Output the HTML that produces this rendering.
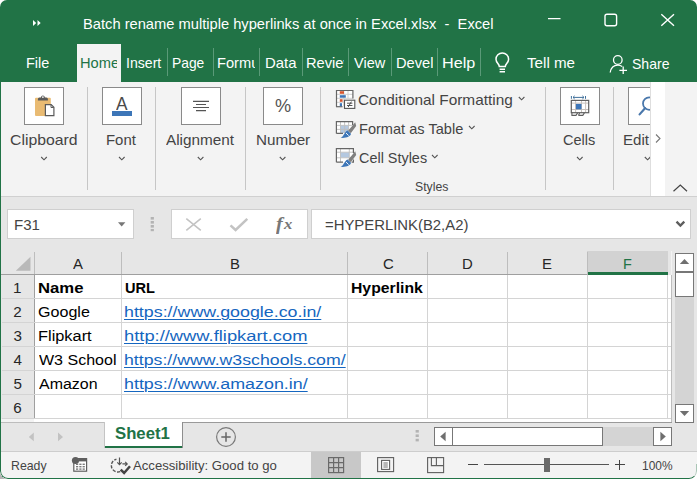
<!DOCTYPE html>
<html lang="en">
<head>
<meta charset="utf-8">
<title>Batch rename multiple hyperlinks at once in Excel.xlsx - Excel</title>
<style>
*{box-sizing:border-box;margin:0;padding:0}
html,body{width:700px;height:479px;background:#fff;overflow:hidden}
body{position:relative;font-family:"Liberation Sans",sans-serif}
.abs,.win div,.win svg{position:absolute}
.win{position:absolute;left:0;top:0;width:697px;height:478.6px;border-radius:7px 7px 8px 8px;overflow:hidden;background:#f3f3f3}
.t{position:absolute;line-height:0;white-space:pre;transform-origin:0 0;display:block;height:0}
.t u{text-decoration-thickness:1px;text-underline-offset:2.4px}
.clip{position:absolute;left:0;top:0;height:479px;overflow:hidden}
.hdr{left:0;top:0;width:697px;height:82px;background:#217346}
.hometab{left:77px;top:44px;width:44px;height:39px;background:#f3f3f3}
.tsep{top:48px;width:1px;height:28px;background:#5a9a78}
.rib{left:0;top:82px;width:697px;height:114px;background:#f3f3f3}
.ibox{top:87px;width:40px;height:38px;background:#fff;border:1px solid #8a8a8a}
.rsep{top:87px;width:1px;height:103px;background:#c6c6c6}
.fbar{left:0;top:196px;width:697px;height:55px;background:#e6e6e6;border-top:1px solid #d0d0d0}
.wbox{background:#fff;border:1px solid #cfcfcf}
.colh{left:0;top:251px;width:671px;height:24px;background:#e6e6e6}
.rowh{left:0;top:275px;width:34px;height:144px;background:#e6e6e6}
.grid{left:34px;top:275px;width:637px;height:147px;background:#fff}
.vl{width:1px;background:#d4d4d4}
.hl{height:1px;background:#d4d4d4}
.sb{background:#fff;border:1px solid #777}
.tabbar{left:0;top:422px;width:697px;height:30px;background:#e6e6e6}
.status{left:0;top:451px;width:697px;height:28px;background:#f3f3f3;border-top:1px solid #cdcdcd}
.frame{left:0;top:60px;width:697px;height:418.6px;border-radius:0 0 8px 8px;border-left:1.2px solid #217346;border-bottom:1.4px solid #217346;border-right:1px solid rgba(33,115,70,.0);pointer-events:none}
</style>
</head>
<body>
<div class="abs" style="left:0;top:470px;width:9px;height:9px;background:#b4b4b4"></div>
<div class="win">
  <!-- title bar + tabs -->
  <div class="hdr"></div>
  <div class="hometab"></div>
  <div class="tsep" style="left:122px;display:none"></div>
  <div class="tsep" style="left:166.5px"></div>
  <div class="tsep" style="left:213px"></div>
  <div class="tsep" style="left:259px"></div>
  <div class="tsep" style="left:302px"></div>
  <div class="tsep" style="left:348px"></div>
  <div class="tsep" style="left:391px"></div>
  <div class="tsep" style="left:437px"></div>
  <div class="tsep" style="left:480px"></div>
  <!-- quick access chevrons -->
  <svg style="left:32.3px;top:18.7px" width="10" height="8" viewBox="0 0 10 8"><path d="M1 1 L4.2 4 L1 7Z M5.5 1 L8.7 4 L5.5 7Z" fill="#fff"/></svg>
  <!-- window controls -->
  <svg style="left:540px;top:8px" width="150" height="24" viewBox="0 0 150 24" fill="none" stroke="#fff" stroke-width="1.4">
    <path d="M8 10.6 H20.5" stroke-width="1.3"/>
    <rect x="65" y="6.2" width="11.6" height="11.6" rx="2"/>
    <path d="M121.3 6.2 L134 17.8 M134 6.2 L121.3 17.8"/>
  </svg>
  <!-- bulb -->
  <svg style="left:494px;top:52px" width="17" height="22" viewBox="0 0 17 22" fill="none" stroke="#fff" stroke-width="1.5">
    <path d="M5.3 14.5 C5.3 12 2 10.8 2 7.2 A6.2 6.2 0 0 1 14.6 7.2 C14.6 10.8 11.3 12 11.3 14.5 Z"/>
    <path d="M5.6 17.3 H11 M5.6 19.8 H11"/>
  </svg>
  <!-- share icon -->
  <svg style="left:609px;top:54px" width="20" height="21" viewBox="0 0 20 21" fill="none" stroke="#fff" stroke-width="1.3">
    <circle cx="8.8" cy="6" r="4.3"/>
    <path d="M1.2 18.5 C2 13.5 5 11.2 8.8 11.2 C10.5 11.2 12 11.7 13.2 12.6"/>
    <path d="M14.2 12.5 V20 M10.4 16.3 H18"/>
  </svg>

  <!-- ribbon -->
  <div class="rib"></div>
  <div class="ibox" style="left:24px"></div>
  <div class="ibox" style="left:102px"></div>
  <div class="ibox" style="left:181px"></div>
  <div class="ibox" style="left:263px"></div>
  <div class="ibox" style="left:560px"></div>
  <div class="ibox" style="left:628px;width:23px;border-right:none"></div>
  <div class="rsep" style="left:87px"></div>
  <div class="rsep" style="left:155px"></div>
  <div class="rsep" style="left:245px"></div>
  <div class="rsep" style="left:320px"></div>
  <div class="rsep" style="left:545px"></div>
  <div class="rsep" style="left:613px"></div>

  <!-- clipboard icon -->
  <svg style="left:33px;top:94px" width="24" height="24" viewBox="0 0 24 24">
    <rect x="2" y="3.8" width="15.8" height="18.2" rx="1" fill="#e9bb73"/>
    <path d="M4.9 6.6 V5 Q4.9 3.4 6.6 3.4 H7.9 Q8.1 1.4 9.9 1.4 Q11.7 1.4 11.9 3.4 H13.2 Q14.9 3.4 14.9 5 V6.6 Z" fill="#5a5a5a"/>
    <circle cx="9.9" cy="3.1" r=".9" fill="#fff"/>
    <path d="M12.4 10.6 H18.2 L20.9 13.3 V21.7 H12.4 Z" fill="#fff" stroke="#5a5a5a" stroke-width="1.2"/>
    <path d="M18 10.8 V13.5 H20.7" fill="none" stroke="#5a5a5a" stroke-width="1"/>
  </svg>
  <!-- font colour bar -->
  <div style="left:112px;top:111px;width:20px;height:5px;background:#3d76b8"></div>
  <!-- alignment lines -->
  <svg style="left:190px;top:98px" width="22" height="16" viewBox="0 0 22 16" stroke="#555" stroke-width="1.1"><path d="M3 3.4 H19 M6 6.5 H16 M3 9.5 H19 M6 12.6 H16"/></svg>
  <!-- conditional formatting icon -->
  <svg style="left:335px;top:89px" width="21" height="21" viewBox="0 0 21 21">
    <rect x="1.5" y="1.5" width="16.4" height="16.2" fill="#fff"/>
    <path d="M1.5 5.3 H17.9 M1.5 9.3 H17.9 M1.5 13.3 H12 M8.8 1.5 V17.5 M13 1.5 V9.5" stroke="#c9c9c9" stroke-width=".9" fill="none"/>
    <path d="M1.5 17.7 V1.5 H17.9 V9.5" fill="none" stroke="#666" stroke-width="1.2"/>
    <path d="M1 17.7 H7.5" stroke="#666" stroke-width="1.2"/>
    <rect x="4.8" y="2.2" width="4.2" height="2.6" fill="#d8552e"/>
    <rect x="4.8" y="6.2" width="6" height="2.5" fill="#3d76b8"/>
    <rect x="4.8" y="10.2" width="2.8" height="2.6" fill="#d8552e"/>
    <rect x="4.8" y="14.2" width="2.2" height="3" fill="#3d76b8"/>
    <rect x="9.5" y="11.2" width="10.3" height="8.2" fill="#fff" stroke="#555" stroke-width="1.1"/>
    <path d="M12 14.2 H17.4 M12 16.5 H17.4 M16.4 12.6 L13.2 18" stroke="#444" stroke-width=".9" fill="none"/>
  </svg>
  <!-- format as table icon -->
  <svg style="left:335px;top:120px" width="22" height="20" viewBox="0 0 22 20">
    <rect x="1.4" y="1.6" width="16.2" height="11.8" fill="#fff"/>
    <rect x="5.6" y="5.4" width="8" height="7.6" fill="#b4c8e0"/>
    <path d="M1.4 5.4 H17.6 M1.4 9.4 H17.6 M5.5 1.6 V13.4 M9.6 1.6 V13.4 M13.6 1.6 V13.4" stroke="#bdbdbd" stroke-width=".9" fill="none"/>
    <path d="M1.4 13.4 V1.6 H17.6 V5 M1.4 13.4 H8" fill="none" stroke="#666" stroke-width="1.2"/>
    <path d="M20.2 2.2 L21.2 6 L15.8 13.2 L13.2 10.8 Z" fill="#808080"/>
    <path d="M12.6 10.6 L16 13.8 C15.4 16.6 11 18.4 5.6 17.8 C9.4 16.4 9.2 11.8 12.6 10.6 Z" fill="#3d76b8"/>
    <path d="M11 13 L13.6 15.6" stroke="#fff" stroke-width=".9"/>
  </svg>
  <!-- cell styles icon -->
  <svg style="left:335px;top:147px" width="22" height="21" viewBox="0 0 22 21">
    <rect x="1.4" y="1.6" width="17" height="13.6" fill="#fff"/>
    <rect x="5.6" y="5.4" width="8.6" height="5.2" fill="#b4c8e0"/>
    <path d="M1.4 5.2 H18.4 M1.4 10.8 H18.4 M5.5 1.6 V15.2 M14.3 1.6 V15.2" stroke="#bdbdbd" stroke-width=".9" fill="none"/>
    <path d="M1.4 15.2 V1.6 H18.4 V6 M1.4 15.2 H8 M18.4 12.6 V15.2 H16.6" fill="none" stroke="#666" stroke-width="1.2"/>
    <path d="M20.2 4.2 L21.2 8 L15.8 15.2 L13.2 12.8 Z" fill="#808080"/>
    <path d="M12.6 12.6 L16 15.8 C15.4 18.6 11 20.4 5.6 19.8 C9.4 18.4 9.2 13.8 12.6 12.6 Z" fill="#3d76b8"/>
    <path d="M11 15 L13.6 17.6" stroke="#fff" stroke-width=".9"/>
  </svg>
  <!-- dropdown chevrons -->
  <svg style="left:0;top:82px" width="697" height="114" viewBox="0 82 697 114" fill="none" stroke="#555" stroke-width="1.1">
    <path d="M41.2 157 L44 159.8 L46.8 157"/>
    <path d="M119 157 L121.8 159.8 L124.6 157"/>
    <path d="M197.8 157 L200.6 159.8 L203.4 157"/>
    <path d="M279.8 157 L282.6 159.8 L285.4 157"/>
    <path d="M577 157 L579.8 159.8 L582.6 157"/>
    <path d="M644.8 157 L647.6 159.8 L650.4 157"/>
    <path d="M518.8 97 L521.6 99.8 L524.4 97"/>
    <path d="M469 126 L471.8 128.8 L474.6 126"/>
    <path d="M432 155 L434.8 157.8 L437.6 155"/>
  </svg>
  <!-- cells icon -->
  <svg style="left:569px;top:93px" width="22" height="24" viewBox="0 0 22 24">
    <path d="M2.4 3 V5.8 M16.5 3 V5.8 M4 4.4 H15 M5.6 2.9 L4 4.4 L5.6 5.9 M13.4 2.9 L15 4.4 L13.4 5.9" fill="none" stroke="#41719c" stroke-width="1"/>
    <rect x="2.3" y="7.4" width="17.4" height="12.3" fill="#fff"/>
    <path d="M2.3 10.1 H19.7 M2.3 16.5 H19.7 M6.6 7.4 V19.7 M12.5 7.4 V19.7 M16.6 7.4 V19.7" stroke="#c8c2bc" stroke-width="1"/>
    <rect x="2.3" y="7.4" width="17.4" height="12.3" fill="none" stroke="#5f5f5f" stroke-width="1.2"/>
    <rect x="6.9" y="10.9" width="5.6" height="5.4" fill="#3d76b8"/>
    <path d="M2.9 19.7 V22.4 H7 L8.6 19.9 M9.4 22.4 H13.8 L15.4 19.9 M9.4 22.4 L10.6 20" fill="none" stroke="#5f5f5f" stroke-width="1.1"/>
  </svg>
  <!-- editing magnifier -->
  <svg style="left:636px;top:94px" width="22" height="24" viewBox="0 0 22 24" fill="none" stroke="#4a78ac" stroke-width="1.8">
    <circle cx="13.2" cy="9.6" r="6.2"/>
    <path d="M9 14.2 L3.6 20.4" stroke-width="2.2" stroke-linecap="round"/>
  </svg>

  <!-- formula bar -->
  <div class="fbar"></div>
  <div class="wbox" style="left:7px;top:209px;width:126.5px;height:29.5px"></div>
  <svg style="left:116.5px;top:220.8px" width="10" height="7" viewBox="0 0 10 7"><path d="M1 1.2 H8.4 L4.7 5.4Z" fill="#777"/></svg>
  <svg style="left:150px;top:216px" width="5" height="16" viewBox="0 0 5 16" fill="#b3b3b3"><rect x=".7" y="1" width="3.2" height="2.6"/><rect x=".7" y="5" width="3.2" height="2.6"/><rect x=".7" y="9" width="3.2" height="2.6"/><rect x=".7" y="13" width="3.2" height="2.2"/></svg>
  <div class="wbox" style="left:171px;top:209px;width:136.5px;height:29.5px"></div>
  <svg style="left:184px;top:216px" width="70" height="17" viewBox="0 0 70 17" fill="none" stroke="#c3c3c3" stroke-width="1.6">
    <path d="M2.3 2.6 L16.8 14.3 M16.8 2.6 L2.3 14.3"/>
    <path d="M46.5 9.3 L51.6 14 L63.3 2.8" stroke-width="2.5"/>
  </svg>
  <div class="wbox" style="left:311px;top:209px;width:379.5px;height:29.5px"></div>
  <svg style="left:675px;top:220px" width="11" height="8" viewBox="0 0 11 8" fill="none" stroke="#5e5e5e" stroke-width="2.3"><path d="M1.5 1.6 L5.4 5.6 L9.3 1.6"/></svg>

  <!-- column headers -->
  <div class="colh"></div>
  <div style="left:587px;top:251px;width:81px;height:24px;background:#d2d2d2"></div>
  <div style="left:587px;top:272px;width:81px;height:2.5px;background:#217346"></div>
  <svg style="left:15px;top:256px" width="17" height="16" viewBox="0 0 17 16"><path d="M15.5 .8 V14.8 H.8Z" fill="#b9b9b9"/></svg>
  <div class="vl" style="left:34px;top:252px;height:23px;background:#bdbdbd"></div>
  <div class="vl" style="left:121px;top:252px;height:23px;background:#bdbdbd"></div>
  <div class="vl" style="left:347px;top:252px;height:23px;background:#bdbdbd"></div>
  <div class="vl" style="left:427px;top:252px;height:23px;background:#bdbdbd"></div>
  <div class="vl" style="left:507px;top:252px;height:23px;background:#bdbdbd"></div>
  <div class="vl" style="left:587px;top:252px;height:23px;background:#bdbdbd"></div>
  <div class="hl" style="left:0;top:274px;width:587px;background:#9f9f9f"></div>

  <!-- grid -->
  <div class="grid"></div>
  <div class="rowh"></div>
  <div class="vl" style="left:34px;top:275px;height:144px;background:#9f9f9f"></div>
  <div class="vl" style="left:121px;top:275px;height:144px"></div>
  <div class="vl" style="left:347px;top:275px;height:144px"></div>
  <div class="vl" style="left:427px;top:275px;height:144px"></div>
  <div class="vl" style="left:507px;top:275px;height:144px"></div>
  <div class="vl" style="left:587px;top:275px;height:144px"></div>
  <div class="vl" style="left:667px;top:275px;height:144px"></div>
  <div class="vl" style="left:671px;top:275px;height:147px;background:#bdbdbd"></div>
  <div class="hl" style="left:2px;top:298px;width:669px"></div>
  <div class="hl" style="left:2px;top:322px;width:669px"></div>
  <div class="hl" style="left:2px;top:346px;width:669px"></div>
  <div class="hl" style="left:2px;top:370px;width:669px"></div>
  <div class="hl" style="left:2px;top:394px;width:669px"></div>
  <div class="hl" style="left:2px;top:418px;width:669px"></div>
  <!-- white overdraw of long link spilling into C handled by text -->

  <!-- sheet tab bar -->
  <div class="tabbar"></div>
  <div class="hl" style="left:0;top:422px;width:105px;background:#bdbdbd"></div>
  <div class="hl" style="left:182px;top:422px;width:490px;background:#9a9a9a"></div>
  <div style="left:104.5px;top:419px;width:78px;height:28px;background:#fff"></div>
  <div style="left:104.5px;top:445.5px;width:78px;height:2px;background:#217346"></div>
  <div class="vl" style="left:182px;top:422px;height:25.5px;background:#8e8e8e"></div>
  <div class="vl" style="left:104px;top:422px;height:25.5px;background:#c4c4c4"></div>
  <svg style="left:28px;top:432px" width="36" height="10" viewBox="0 0 36 10" fill="#c2c2c2"><path d="M5.8 .5 V9.3 L.8 4.9Z M30 .5 V9.3 L35 4.9Z"/></svg>
  <svg style="left:215px;top:426px" width="22" height="22" viewBox="0 0 22 22" fill="none" stroke="#7a7a7a" stroke-width="1.2"><circle cx="11" cy="11" r="9.4"/><path d="M11 6.3 V15.7 M6.3 11 H15.7" stroke-width="1.5" stroke="#666"/></svg>
  <svg style="left:415px;top:429px" width="5" height="14" viewBox="0 0 5 14" fill="#b3b3b3"><rect x=".6" y="1" width="3.2" height="2.6"/><rect x=".6" y="5.4" width="3.2" height="2.6"/><rect x=".6" y="9.8" width="3.2" height="2.6"/></svg>
  <!-- vertical scrollbar -->
  <div style="left:672px;top:251px;width:25px;height:173px;background:#e6e6e6"></div>
  <div style="left:675px;top:296px;width:19px;height:108px;background:#d4d4d4"></div>
  <div class="sb" style="left:675px;top:253px;width:19px;height:18.5px"></div>
  <div class="sb" style="left:675px;top:271.5px;width:19px;height:25px"></div>
  <div class="sb" style="left:675px;top:404px;width:19px;height:18.5px"></div>
  <svg style="left:679px;top:258px" width="11" height="7" viewBox="0 0 11 7"><path d="M.8 6 L5.5 1 L10.2 6Z" fill="#6f6f6f"/></svg>
  <svg style="left:679px;top:410px" width="11" height="7" viewBox="0 0 11 7"><path d="M.8 1 L5.5 6 L10.2 1Z" fill="#6f6f6f"/></svg>

  <!-- h scrollbar -->
  <div style="left:602px;top:427px;width:52px;height:19px;background:#d4d4d4"></div>
  <div class="sb" style="left:434px;top:427px;width:19px;height:19px"></div>
  <div class="sb" style="left:452px;top:427px;width:151px;height:19px"></div>
  <div class="sb" style="left:653px;top:427px;width:19px;height:19px"></div>
  <svg style="left:439px;top:431px" width="8" height="11" viewBox="0 0 8 11"><path d="M6.6 .8 V10.2 L1.2 5.5Z" fill="#6f6f6f"/></svg>
  <svg style="left:659px;top:431px" width="8" height="11" viewBox="0 0 8 11"><path d="M1.4 .8 V10.2 L6.8 5.5Z" fill="#6f6f6f"/></svg>

  <!-- status bar -->
  <div class="status"></div>
  <div style="left:311px;top:452px;width:50px;height:26px;background:#c8c8c8"></div>

  <!-- macro record icon -->
  <svg style="left:71px;top:456px" width="18" height="17" viewBox="0 0 18 17">
    <rect x="2.8" y="2.6" width="12.8" height="12.6" fill="#fff" stroke="#5f5f5f" stroke-width="1.2"/>
    <rect x="8" y="2.2" width="8" height="3.2" fill="#5f5f5f"/>
    <g fill="#7a7a7a"><rect x="5" y="7.6" width="2.2" height="1.4"/><rect x="8.3" y="7.6" width="2.2" height="1.4"/><rect x="11.6" y="7.6" width="2.2" height="1.4"/>
    <rect x="5" y="10" width="2.2" height="1.4"/><rect x="8.3" y="10" width="2.2" height="1.4"/><rect x="11.6" y="10" width="2.2" height="1.4"/>
    <rect x="5" y="12.4" width="2.2" height="1.4"/><rect x="8.3" y="12.4" width="2.2" height="1.4"/><rect x="11.6" y="12.4" width="2.2" height="1.4"/></g>
    <circle cx="4.5" cy="4.5" r="3.6" fill="#5f5f5f"/>
  </svg>
  <!-- accessibility icon -->
  <svg style="left:110.2px;top:456.3px" width="23" height="21" viewBox="0 0 23 21" fill="none" stroke="#555">
    <path d="M10.2 15.6 A6.5 6.5 0 1 1 6.4 3.2" stroke-width="1.4" stroke-dasharray="3.2 1.5"/>
    <path d="M9.5 1.6 V8.4 M7.3 6.4 L9.5 8.6 L11.7 6.4 M12.4 7.9 H17 M15.2 5.9 L17.2 7.9 L15.2 9.9" stroke-width="1.2"/>
    <path d="M10.7 13.6 L14.1 17 L20 10.2" stroke-width="2.5" stroke="#444"/>
  </svg>
  <!-- view buttons -->
  <svg style="left:327px;top:456px" width="18" height="18" viewBox="0 0 18 18" fill="none" stroke="#6a6a6a" stroke-width="1.2">
    <rect x="1.6" y="1.6" width="15" height="15"/><path d="M6.6 1.6 V16.6 M11.6 1.6 V16.6 M1.6 6.6 H16.6 M1.6 11.6 H16.6"/>
  </svg>
  <svg style="left:376px;top:456px" width="19" height="17" viewBox="0 0 19 17" fill="none" stroke="#5f5f5f" stroke-width="1.1">
    <rect x="1.6" y="1.6" width="16" height="14"/><rect x="5.6" y="4.4" width="8" height="9" fill="#fff"/><path d="M7.4 7 H11.8 M7.4 9 H11.8 M7.4 11 H11.8" stroke-width=".9"/>
  </svg>
  <svg style="left:426px;top:456px" width="19" height="18" viewBox="0 0 19 18" fill="none" stroke="#5f5f5f" stroke-width="1.1">
    <rect x="1.6" y="1.6" width="16" height="15"/><path d="M5.4 1.6 V9.6 H17.6 M10.4 1.6 V9.6"/>
  </svg>

  <div style="left:468px;top:464px;width:10px;height:1.3px;background:#444"></div>
  <div style="left:484px;top:464.3px;width:125px;height:1px;background:#555"></div>
  <div style="left:544px;top:458px;width:6px;height:13.5px;background:#6a6a6a"></div>
  <div style="left:615px;top:464px;width:9.5px;height:1.3px;background:#444"></div>
  <div style="left:619.1px;top:460px;width:1.3px;height:9.5px;background:#444"></div>

  <span class="t" style="left:82.82px;top:23.70px;font-size:15px;color:#fff;font-weight:400;font-family:'Liberation Sans', sans-serif;transform:scaleX(0.9789);">Batch rename multiple hyperlinks at once in Excel.xlsx  -  Excel</span>
  <span class="t" style="left:25.83px;top:62.80px;font-size:15px;color:#fff;font-weight:400;font-family:'Liberation Sans', sans-serif;transform:scaleX(0.9652);">File</span>
  <div class="clip" style="width:117px"><span class="t" style="left:79.52px;top:62.80px;font-size:15px;color:#217346;font-weight:400;font-family:'Liberation Sans', sans-serif;transform:scaleX(0.9768);">Home</span></div>
  <span class="t" style="left:125.86px;top:62.80px;font-size:15px;color:#fff;font-weight:400;font-family:'Liberation Sans', sans-serif;transform:scaleX(0.9405);">Insert</span>
  <span class="t" style="left:171.58px;top:62.80px;font-size:15px;color:#fff;font-weight:400;font-family:'Liberation Sans', sans-serif;transform:scaleX(0.9206);">Page</span>
  <div class="clip" style="width:254.8px"><span class="t" style="left:217.32px;top:62.80px;font-size:15px;color:#fff;font-weight:400;font-family:'Liberation Sans', sans-serif;transform:scaleX(0.9768);">Formulas</span></div>
  <span class="t" style="left:264.51px;top:62.80px;font-size:15px;color:#fff;font-weight:400;font-family:'Liberation Sans', sans-serif;transform:scaleX(0.9935);">Data</span>
  <div class="clip" style="width:343.5px"><span class="t" style="left:306.02px;top:62.80px;font-size:15px;color:#fff;font-weight:400;font-family:'Liberation Sans', sans-serif;transform:scaleX(0.9768);">Review</span></div>
  <span class="t" style="left:353.60px;top:62.80px;font-size:15px;color:#fff;font-weight:400;font-family:'Liberation Sans', sans-serif;transform:scaleX(0.9667);">View</span>
  <div class="clip" style="width:433.2px"><span class="t" style="left:396.02px;top:62.80px;font-size:15px;color:#fff;font-weight:400;font-family:'Liberation Sans', sans-serif;transform:scaleX(0.9768);">Developer</span></div>
  <span class="t" style="left:441.92px;top:62.80px;font-size:15px;color:#fff;font-weight:400;font-family:'Liberation Sans', sans-serif;transform:scaleX(1.0793);">Help</span>
  <span class="t" style="left:527.00px;top:62.80px;font-size:15px;color:#fff;font-weight:400;font-family:'Liberation Sans', sans-serif;transform:scaleX(1.0106);">Tell me</span>
  <span class="t" style="left:631.56px;top:63.80px;font-size:15px;color:#fff;font-weight:400;font-family:'Liberation Sans', sans-serif;transform:scaleX(0.9359);">Share</span>
  <span class="t" style="left:9.95px;top:140.00px;font-size:15px;color:#444444;font-weight:400;font-family:'Liberation Sans', sans-serif;transform:scaleX(1.0532);">Clipboard</span>
  <span class="t" style="left:106.01px;top:140.00px;font-size:15px;color:#444444;font-weight:400;font-family:'Liberation Sans', sans-serif;transform:scaleX(0.9931);">Font</span>
  <span class="t" style="left:166.30px;top:140.00px;font-size:15px;color:#444444;font-weight:400;font-family:'Liberation Sans', sans-serif;transform:scaleX(1.0209);">Alignment</span>
  <span class="t" style="left:256.18px;top:140.00px;font-size:15px;color:#444444;font-weight:400;font-family:'Liberation Sans', sans-serif;transform:scaleX(1.0154);">Number</span>
  <span class="t" style="left:358.47px;top:99.50px;font-size:15px;color:#444444;font-weight:400;font-family:'Liberation Sans', sans-serif;transform:scaleX(1.0255);">Conditional Formatting</span>
  <span class="t" style="left:358.53px;top:128.50px;font-size:15px;color:#444444;font-weight:400;font-family:'Liberation Sans', sans-serif;transform:scaleX(0.9717);">Format as Table</span>
  <span class="t" style="left:358.54px;top:157.80px;font-size:15px;color:#444444;font-weight:400;font-family:'Liberation Sans', sans-serif;transform:scaleX(0.9609);">Cell Styles</span>
  <span class="t" style="left:415.36px;top:186.69px;font-size:13px;color:#444444;font-weight:400;font-family:'Liberation Sans', sans-serif;transform:scaleX(0.9412);">Styles</span>
  <span class="t" style="left:563.03px;top:140.00px;font-size:15px;color:#444444;font-weight:400;font-family:'Liberation Sans', sans-serif;transform:scaleX(0.9688);">Cells</span>
  <span class="t" style="left:623.39px;top:140.00px;font-size:15px;color:#444444;font-weight:400;font-family:'Liberation Sans', sans-serif;transform:scaleX(1.0080);">Edit</span>
  <span class="t" style="left:116.30px;top:103.93px;font-size:17.5px;color:#4a4a4a;font-weight:400;font-family:'Liberation Sans', sans-serif;transform:scaleX(0.9872);">A</span>
  <span class="t" style="left:274.78px;top:106.41px;font-size:19px;color:#555;font-weight:400;font-family:'Liberation Sans', sans-serif;transform:scaleX(0.9548);">%</span>
  <span class="t" style="left:275.50px;top:223.91px;font-size:19px;color:#777;font-weight:700;font-family:'Liberation Serif', serif;transform:scaleX(1.0625);font-style:italic;">f</span>
  <span class="t" style="left:284.30px;top:225.45px;font-size:14px;color:#777;font-weight:700;font-family:'Liberation Serif', serif;transform:scaleX(1.1857);font-style:italic;">x</span>
  <span class="t" style="left:13.78px;top:224.97px;font-size:14.8px;color:#444444;font-weight:400;font-family:'Liberation Sans', sans-serif;transform:scaleX(1.0167);">F31</span>
  <span class="t" style="left:324.80px;top:224.97px;font-size:14.8px;color:#444444;font-weight:400;font-family:'Liberation Sans', sans-serif;transform:scaleX(1.0050);">=HYPERLINK(B2,A2)</span>
  <span class="t" style="left:73.10px;top:263.93px;font-size:15.2px;color:#262626;font-weight:400;font-family:'Liberation Sans', sans-serif;transform:scaleX(0.9800);">A</span>
  <span class="t" style="left:229.86px;top:263.93px;font-size:15.2px;color:#262626;font-weight:400;font-family:'Liberation Sans', sans-serif;transform:scaleX(0.9800);">B</span>
  <span class="t" style="left:382.61px;top:263.93px;font-size:15.2px;color:#262626;font-weight:400;font-family:'Liberation Sans', sans-serif;transform:scaleX(0.9800);">C</span>
  <span class="t" style="left:461.86px;top:263.93px;font-size:15.2px;color:#262626;font-weight:400;font-family:'Liberation Sans', sans-serif;transform:scaleX(0.9800);">D</span>
  <span class="t" style="left:542.23px;top:263.93px;font-size:15.2px;color:#262626;font-weight:400;font-family:'Liberation Sans', sans-serif;transform:scaleX(0.9800);">E</span>
  <span class="t" style="left:623.25px;top:263.93px;font-size:15.2px;color:#217346;font-weight:400;font-family:'Liberation Sans', sans-serif;transform:scaleX(0.9500);">F</span>
  <span class="t" style="left:13.12px;top:287.63px;font-size:15.2px;color:#262626;font-weight:400;font-family:'Liberation Sans', sans-serif;transform:scaleX(1.0000);">1</span>
  <span class="t" style="left:13.25px;top:311.63px;font-size:15.2px;color:#262626;font-weight:400;font-family:'Liberation Sans', sans-serif;transform:scaleX(1.0000);">2</span>
  <span class="t" style="left:13.38px;top:335.63px;font-size:15.2px;color:#262626;font-weight:400;font-family:'Liberation Sans', sans-serif;transform:scaleX(1.0000);">3</span>
  <span class="t" style="left:13.38px;top:359.63px;font-size:15.2px;color:#262626;font-weight:400;font-family:'Liberation Sans', sans-serif;transform:scaleX(1.0000);">4</span>
  <span class="t" style="left:13.38px;top:383.63px;font-size:15.2px;color:#262626;font-weight:400;font-family:'Liberation Sans', sans-serif;transform:scaleX(1.0000);">5</span>
  <span class="t" style="left:13.25px;top:407.63px;font-size:15.2px;color:#262626;font-weight:400;font-family:'Liberation Sans', sans-serif;transform:scaleX(1.0000);">6</span>
  <span class="t" style="left:37.70px;top:287.73px;font-size:15.2px;color:#000;font-weight:700;font-family:'Liberation Sans', sans-serif;transform:scaleX(1.1000);">Name</span>
  <span class="t" style="left:125.04px;top:287.73px;font-size:15.2px;color:#000;font-weight:700;font-family:'Liberation Sans', sans-serif;transform:scaleX(0.9600);">URL</span>
  <span class="t" style="left:351.26px;top:287.73px;font-size:15.2px;color:#000;font-weight:700;font-family:'Liberation Sans', sans-serif;transform:scaleX(1.0368);">Hyperlink</span>
  <span class="t" style="left:37.74px;top:311.73px;font-size:15.2px;color:#000;font-weight:400;font-family:'Liberation Sans', sans-serif;transform:scaleX(1.0583);">Google</span>
  <span class="t" style="left:37.72px;top:335.83px;font-size:15.2px;color:#000;font-weight:400;font-family:'Liberation Sans', sans-serif;transform:scaleX(1.0776);">Flipkart</span>
  <span class="t" style="left:38.80px;top:359.73px;font-size:15.2px;color:#000;font-weight:400;font-family:'Liberation Sans', sans-serif;transform:scaleX(1.0548);">W3 School</span>
  <span class="t" style="left:38.80px;top:383.73px;font-size:15.2px;color:#000;font-weight:400;font-family:'Liberation Sans', sans-serif;transform:scaleX(1.0509);">Amazon</span>
  <span class="t" style="left:124.33px;top:311.73px;font-size:15.2px;color:#1566c0;font-weight:400;font-family:'Liberation Sans', sans-serif;transform:scaleX(1.1743);"><u>https://www.google.co.in/</u></span>
  <span class="t" style="left:124.29px;top:335.83px;font-size:15.2px;color:#1566c0;font-weight:400;font-family:'Liberation Sans', sans-serif;transform:scaleX(1.2073);"><u>http://www.flipkart.com</u></span>
  <span class="t" style="left:124.33px;top:359.73px;font-size:15.2px;color:#1566c0;font-weight:400;font-family:'Liberation Sans', sans-serif;transform:scaleX(1.1672);"><u>https://www.w3schools.com/</u></span>
  <span class="t" style="left:124.32px;top:383.73px;font-size:15.2px;color:#1566c0;font-weight:400;font-family:'Liberation Sans', sans-serif;transform:scaleX(1.1761);"><u>https://www.amazon.in/</u></span>
  <span class="t" style="left:115.29px;top:433.08px;font-size:16.5px;color:#217346;font-weight:700;font-family:'Liberation Sans', sans-serif;transform:scaleX(1.0132);">Sheet1</span>
  <span class="t" style="left:10.85px;top:466.29px;font-size:13px;color:#444444;font-weight:400;font-family:'Liberation Sans', sans-serif;transform:scaleX(0.9459);">Ready</span>
  <span class="t" style="left:132.80px;top:466.29px;font-size:13px;color:#444444;font-weight:400;font-family:'Liberation Sans', sans-serif;transform:scaleX(1.0106);">Accessibility: Good to go</span>
  <span class="t" style="left:642.05px;top:465.87px;font-size:12.5px;color:#444444;font-weight:400;font-family:'Liberation Sans', sans-serif;transform:scaleX(0.9548);">100%</span>
  <!-- ribbon scroll overlay -->
  <div style="left:650px;top:82px;width:15px;height:114px;background:#fff;border-left:1px solid #dedede"></div>
  <svg style="left:654px;top:133px" width="8" height="11" viewBox="0 0 8 11" fill="none" stroke="#777" stroke-width="1.1"><path d="M2 1.5 L6 5.5 L2 9.5"/></svg>
  <svg style="left:672px;top:183px" width="17" height="10" viewBox="0 0 17 10" fill="none" stroke="#444" stroke-width="1.2"><path d="M1.5 8.3 L8.3 2 L15 8.3"/></svg>

  <div class="frame"></div>
  <div style="left:680px;top:464px;width:17px;height:14.6px;border-radius:0 0 8px 0;border-right:1px solid rgba(33,115,70,.35);pointer-events:none"></div>
</div>
</body>
</html>
